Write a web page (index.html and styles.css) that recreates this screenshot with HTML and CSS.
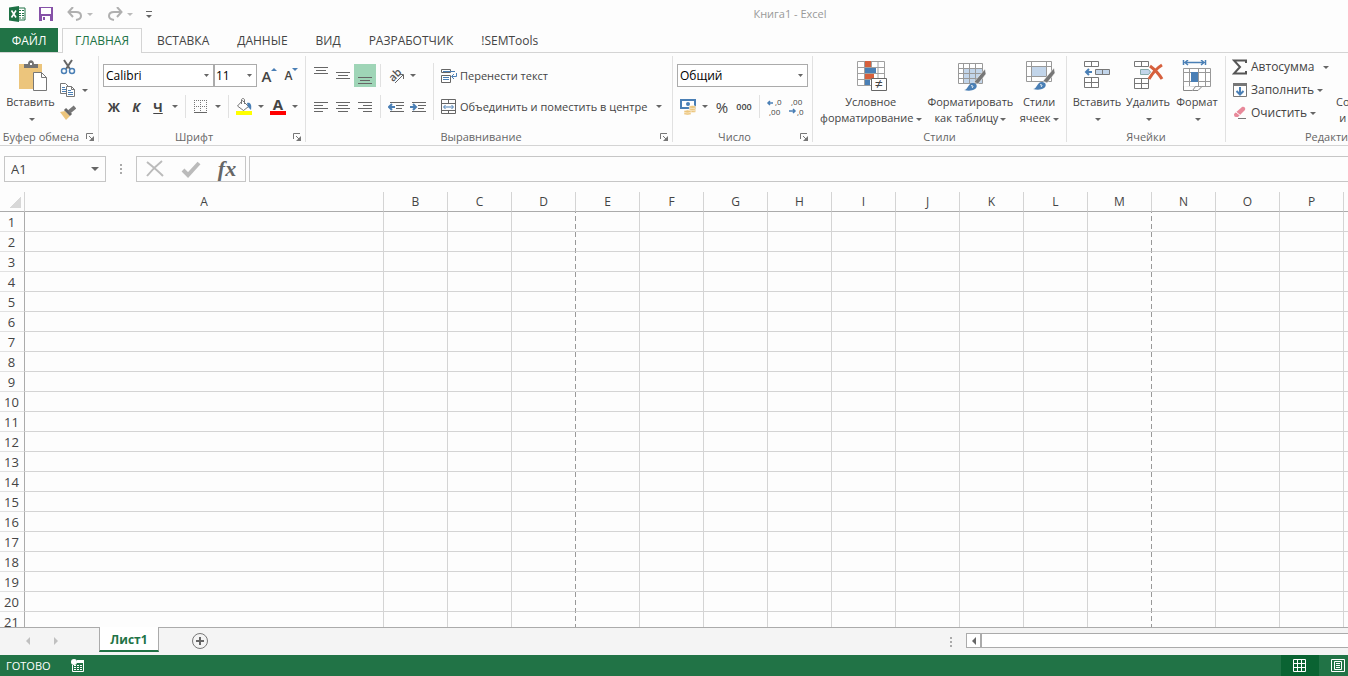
FILE: index.html
```html
<!DOCTYPE html>
<html lang="ru">
<head>
  <meta charset="UTF-8">
  <title>Книга1 - Excel</title>
  <link rel="stylesheet" href="styles.css">
</head>
<body>

  <header class="titlebar">
    <div class="quick-access">
      <svg class="app-logo" width="17" height="16" viewBox="0 0 17 16"><path d="M9 2h7v12H9z" fill="#fff" stroke="#1e7145"/><path d="M10 4.500h2M13 4.500h2M10 7.500h2M13 7.500h2M10 9.500h2M13 9.500h2M10 12h2M13 12h2" stroke="#1e7145"/><path d="M0 1.500L10 0v16L0 14.500z" fill="#1e7145"/><path d="M2.500 4.500l4.500 7M7 4.500l-4.500 7" stroke="#fff" stroke-width="1.600"/></svg>
      <button class="save" aria-label="Сохранить"><svg width="14" height="14" viewBox="0 0 14 14"><path d="M0 0h14v14H0z" fill="#8652a8"/><path d="M2 1h10v6H2zM3 9h8v5H3z" fill="#fff"/><path d="M4 10h2v3H4z" fill="#8652a8"/></svg></button>
      <button class="undo" aria-label="Отменить"><svg width="16" height="14" viewBox="0 0 16 14" fill="none" stroke="#b0b0b0" stroke-width="2"><path d="M2 5h7c3 0 5 1 5 4 0 2-2 3.500-5 4"/><path d="M6 0L1.500 5 6 10"/></svg><i class="caret pale"></i></button>
      <button class="redo" aria-label="Вернуть"><svg width="16" height="14" viewBox="0 0 16 14" fill="none" stroke="#b0b0b0" stroke-width="2"><path d="M14 5H7C4 5 2 6 2 9c0 2 2 3.500 5 4"/><path d="M10 0l4.500 5L10 10"/></svg><i class="caret pale"></i></button>
      <button class="customize" aria-label="Настройка панели"><i class="caret"></i></button>
    </div>
    <div class="title">Книга1 - Excel</div>
  </header>

  <nav class="tabs">
    <a class="tab file" href="#file">ФАЙЛ</a>
    <a class="tab active" href="#home">ГЛАВНАЯ</a>
    <a class="tab" href="#insert">ВСТАВКА</a>
    <a class="tab" href="#data">ДАННЫЕ</a>
    <a class="tab" href="#view">ВИД</a>
    <a class="tab" href="#developer">РАЗРАБОТЧИК</a>
    <a class="tab" href="#semtools">!SEMTools</a>
  </nav>

  <div class="ribbon">

    <section class="group clipboard">
      <div class="group-body">
        <button class="big">
          <svg width="32" height="32" viewBox="0 0 32 32"><path d="M4 4h23v25H4z" fill="#ecc57c"/><path d="M9 8V4h4c0-5 6-5 6 0h4v4z" fill="#737373"/><path d="M15 3h2v2h-2z" fill="#fff"/><path d="M18.500 12.500h8l5 5v13h-13z" fill="#fff" stroke="#777"/><path d="M26.500 12.500v5h5" fill="none" stroke="#777"/></svg>
          <span>Вставить</span>
          <span><i class="caret"></i></span>
        </button>
        <div class="stack">
          <button class="icon" aria-label="Вырезать"><svg width="16" height="16" viewBox="0 0 16 16" fill="none"><path d="M4 1l6 9M12 1l-6 9" stroke="#666" stroke-width="2"/><circle cx="4" cy="12" r="2.500" stroke="#4a7fb5" stroke-width="1.500"/><circle cx="12" cy="12" r="2.500" stroke="#4a7fb5" stroke-width="1.500"/></svg></button>
          <div class="row">
            <button class="icon" aria-label="Копировать"><svg width="16" height="16" viewBox="0 0 16 16"><path d="M.5 1.500h5l3 3v7h-8z" fill="#fff" stroke="#777"/><path d="M2 5.500h3M2 7.500h4M2 9.500h4" stroke="#4a7fb5"/><path d="M6.500 4.500h5l3 3v7h-8z" fill="#fff" stroke="#777"/><path d="M11.500 4.500v3h3" fill="none" stroke="#777"/><path d="M8 8.500h3M8 10.500h5M8 12.500h5" stroke="#4a7fb5"/></svg></button>
            <button class="drop" aria-label="Параметры копирования"><i class="caret"></i></button>
          </div>
          <button class="icon" aria-label="Формат по образцу"><svg width="16" height="16" viewBox="0 0 16 16"><path d="M0 7l5-1 5 5-4 4z" fill="#ecc57c"/><path d="M5 4l6 6" stroke="#666" stroke-width="3"/><path d="M9 7l6-5" stroke="#777" stroke-width="4"/></svg></button>
        </div>
      </div>
      <div class="group-label"><span>Буфер обмена</span><button class="launcher" aria-label="Буфер обмена"><svg width="8" height="8"><path d="M.5 6V.5H7" fill="none" stroke="#777"/><path d="M3 3l3 3" stroke="#777"/><path d="M8 3v5H3z" fill="#777"/></svg></button></div>
    </section>

    <section class="group font">
      <div class="group-body rows">
        <div class="row">
          <select class="font-name" aria-label="Шрифт"><option>Calibri</option></select>
          <select class="font-size" aria-label="Размер шрифта"><option>11</option></select>
          <button class="icon resize" aria-label="Увеличить размер шрифта"><span class="letter large">А</span><i class="up"></i></button>
          <button class="icon resize" aria-label="Уменьшить размер шрифта"><span class="letter">А</span><i class="down"></i></button>
        </div>
        <div class="row">
          <button class="icon bold">Ж</button>
          <button class="icon italic">К</button>
          <button class="icon underline">Ч</button>
          <button class="drop" aria-label="Вид подчёркивания"><i class="caret"></i></button>
          <i class="divider"></i>
          <button class="icon" aria-label="Границы"><svg width="14" height="14"><path d="M0 .5h13M0 6.500h13M.5 0v12M6.500 0v12M12.500 0v12" stroke="#777" stroke-dasharray="1 1"/><path d="M0 12.500h13" stroke="#666"/></svg></button>
          <button class="drop" aria-label="Виды границ"><i class="caret"></i></button>
          <i class="divider"></i>
          <button class="icon" aria-label="Цвет заливки"><svg width="16" height="17"><path d="M6.500 2.500l6 6-5 4-6-4.500z" fill="#fff" stroke="#777"/><path d="M5.500 6V2c0-2 3-2 3 0v4" fill="none" stroke="#777"/><path d="M11 5c3-1 5 1 4 7l-3-3z" fill="#4a7fb5"/><path d="M0 13h16v4H0z" fill="#ff0"/></svg></button>
          <button class="drop" aria-label="Цвета заливки"><i class="caret"></i></button>
          <button class="icon color" aria-label="Цвет текста"><span>А</span></button>
          <button class="drop" aria-label="Цвета текста"><i class="caret"></i></button>
        </div>
      </div>
      <div class="group-label"><span>Шрифт</span><button class="launcher" aria-label="Параметры шрифта"><svg width="8" height="8"><path d="M.5 6V.5H7" fill="none" stroke="#777"/><path d="M3 3l3 3" stroke="#777"/><path d="M8 3v5H3z" fill="#777"/></svg></button></div>
    </section>

    <section class="group align">
      <div class="group-body">
        <div class="rows">
          <div class="row">
            <button class="icon" aria-label="По верхнему краю"><svg width="14" height="20"><path d="M0 1.500h14M2 4.500h10M0 7.500h14" stroke="#666"/></svg></button>
            <button class="icon" aria-label="По середине"><svg width="14" height="20"><path d="M0 6.500h14M2 9.500h10M0 12.500h14" stroke="#666"/></svg></button>
            <button class="icon pressed" aria-label="По нижнему краю"><svg width="14" height="20"><path d="M0 11.500h14M2 14.500h10M0 17.500h14" stroke="#666"/></svg></button>
            <i class="divider"></i>
            <button class="icon" aria-label="Ориентация"><svg class="rotate" width="18" height="18"><text class="ab" x="2" y="12" transform="rotate(-45 8 9)">ab</text><path d="M8 16l8-8M12 7.500h4.500V12" fill="none" stroke="#666"/></svg></button>
            <button class="drop" aria-label="Виды ориентации"><i class="caret"></i></button>
          </div>
          <div class="row">
            <button class="icon" aria-label="По левому краю"><svg width="14" height="12"><path d="M0 1.500h14M0 4.500h9M0 7.500h14M0 10.500h9" stroke="#666"/></svg></button>
            <button class="icon" aria-label="По центру"><svg width="14" height="12"><path d="M0 1.500h14M2 4.500h10M0 7.500h14M2 10.500h10" stroke="#666"/></svg></button>
            <button class="icon" aria-label="По правому краю"><svg width="14" height="12"><path d="M0 1.500h14M5 4.500h9M0 7.500h14M5 10.500h9" stroke="#666"/></svg></button>
            <i class="divider"></i>
            <button class="icon" aria-label="Уменьшить отступ"><svg width="16" height="12"><path d="M2 1.500h14M8 4.500h8M8 7.500h6M2 10.500h14" stroke="#666"/><path d="M7 6H1M4 3L1 6l3 3" fill="none" stroke="#4a7fb5" stroke-width="2"/></svg></button>
            <button class="icon" aria-label="Увеличить отступ"><svg width="16" height="12"><path d="M2 1.500h14M8 4.500h8M8 7.500h6M2 10.500h14" stroke="#666"/><path d="M0 6h6M3 3l3 3-3 3" fill="none" stroke="#4a7fb5" stroke-width="2"/></svg></button>
          </div>
        </div>
        <i class="divider tall"></i>
        <div class="rows">
          <button class="line"><svg width="16" height="16"><path d="M.5 1.500h9v3h-9zM.5 7.500h9v7h-9z" fill="#fff" stroke="#666"/><path d="M2 3.500h12M2 9.500h6M2 11.500h6M15.500 5v3.500H11M13 6l-2.500 2.500L13 11" fill="none" stroke="#4a7fb5"/></svg>Перенести текст</button>
          <button class="line merge"><svg width="16" height="16"><path d="M.5.5h14v14H.5zM.5 4.500h14M.5 11.500h14M7.500.5v4M7.500 11.500v3" fill="none" stroke="#666"/><path d="M3 8h9M4.500 6L2.500 8l2 2M10.500 6l2 2-2 2" fill="none" stroke="#4a7fb5"/></svg>Объединить и поместить в центре<i class="caret"></i></button>
        </div>
      </div>
      <div class="group-label"><span>Выравнивание</span><button class="launcher" aria-label="Параметры выравнивания"><svg width="8" height="8"><path d="M.5 6V.5H7" fill="none" stroke="#777"/><path d="M3 3l3 3" stroke="#777"/><path d="M8 3v5H3z" fill="#777"/></svg></button></div>
    </section>

    <section class="group number">
      <div class="group-body rows">
        <div class="row">
          <select class="format" aria-label="Числовой формат"><option>Общий</option></select>
        </div>
        <div class="row">
          <button class="icon" aria-label="Финансовый формат"><svg width="16" height="16"><path d="M1 1h14v8H1z" fill="#fff" stroke="#4a7fb5" stroke-width="2"/><circle cx="8" cy="5" r="2" fill="#4a7fb5"/><g fill="#ecc57c" stroke="#fff" stroke-width=".5"><ellipse cx="12.500" cy="12" rx="3.500" ry="1.500"/><ellipse cx="12.500" cy="10" rx="3.500" ry="1.500"/><ellipse cx="12.500" cy="8" rx="3.500" ry="1.500"/><ellipse cx="7.500" cy="14.500" rx="3.500" ry="1.500"/><ellipse cx="7.500" cy="12.500" rx="3.500" ry="1.500"/></g></svg></button>
          <button class="drop" aria-label="Валюты"><i class="caret"></i></button>
          <button class="icon percent">%</button>
          <button class="icon thousands">000</button>
          <i class="divider"></i>
          <button class="icon" aria-label="Увеличить разрядность"><svg class="digits" width="16" height="16"><text x="8" y="6">,0</text><text x="2" y="16">,00</text><path d="M6 4H1M3 2L1 4l2 2" fill="none" stroke="#4a7fb5" stroke-width="1.500"/></svg></button>
          <button class="icon" aria-label="Уменьшить разрядность"><svg class="digits" width="16" height="16"><text x="2" y="6">,00</text><text x="8" y="16">,0</text><path d="M0 12h6M4 10l2 2-2 2" fill="none" stroke="#4a7fb5" stroke-width="1.500"/></svg></button>
        </div>
      </div>
      <div class="group-label"><span>Число</span><button class="launcher" aria-label="Параметры числа"><svg width="8" height="8"><path d="M.5 6V.5H7" fill="none" stroke="#777"/><path d="M3 3l3 3" stroke="#777"/><path d="M8 3v5H3z" fill="#777"/></svg></button></div>
    </section>

    <section class="group styles">
      <div class="group-body">
        <button class="big conditional">
          <svg width="32" height="32"><path d="M2.500 1.500h27v24h-27zM2.500 7.500h27M2.500 13.500h27M2.500 19.500h27M9.500 1v24M16.500 1v24M23 1v24" fill="#fff" stroke="#a0a0a0"/><path d="M10 1h6v6h-6zM10 14h9v5h-9z" fill="#d6603d"/><path d="M10 8h11v5H10zM10 20h5v5h-5z" fill="#4a7fb5"/><path d="M16.500 18.500h15v12h-15z" fill="#fff" stroke="#666"/><text class="not-equal" x="20" y="29">≠</text></svg>
          <span>Условное</span>
          <span>форматирование<i class="caret"></i></span>
        </button>
        <button class="big as-table">
          <svg width="32" height="32"><path d="M4.500 3.500h24v20h-24z" fill="#fff" stroke="#999"/><path d="M10 9h18v14H10z" fill="#c2d5ea"/><path d="M4 8.500h24M4 13.500h24M4 18.500h24M9.500 3v20M15.500 3v20M21.500 3v20" stroke="#999"/><path d="M20 22L31 9l1 5-8 10z" fill="#777" stroke="#fff" stroke-width=".5"/><path d="M10 30c4 0 4-7 9-7 4 0 5 4 2 6-3 2-7 2-11 1z" fill="#4a7fb5"/><path d="M17 26c1-1 3 0 1 2" stroke="#fff" fill="none"/></svg>
          <span>Форматировать</span>
          <span>как таблицу<i class="caret"></i></span>
        </button>
        <button class="big cell-styles">
          <svg width="32" height="32"><path d="M3.500 1.500h25v20h-25zM3.500 6.500h25M3.500 16.500h25M8.500 1v20M23.500 1v20" fill="#fff" stroke="#999"/><path d="M9 7h14v9H9z" fill="#c2d5ea"/><path d="M20 21L31 8l1 5-8 10z" fill="#777" stroke="#fff" stroke-width=".5"/><path d="M10 29c4 0 4-7 9-7 4 0 5 4 2 6-3 2-7 2-11 1z" fill="#4a7fb5"/><path d="M17 25c1-1 3 0 1 2" stroke="#fff" fill="none"/></svg>
          <span>Стили</span>
          <span>ячеек<i class="caret"></i></span>
        </button>
      </div>
      <div class="group-label"><span>Стили</span></div>
    </section>

    <section class="group cells">
      <div class="group-body">
        <button class="big insert">
          <svg width="32" height="32"><path d="M3.500 1.500h14v5h-14zM10.500 1.500v5M3.500 17.500h14v10h-14zM3.500 22.500h14M10.500 17.500v10" fill="#fff" stroke="#777"/><path d="M14.500 9.500h14v5h-14zM21.500 9.500v5" fill="#c2d5ea" stroke="#777"/><path d="M11 12H5M8 9l-3 3 3 3" fill="none" stroke="#4a7fb5" stroke-width="2"/></svg>
          <span>Вставить</span>
          <span><i class="caret"></i></span>
        </button>
        <button class="big delete">
          <svg width="32" height="32"><path d="M2.500 1.500h14v5h-14zM9.500 1.500v5M2.500 18.500h14v10h-14zM2.500 23.500h14M9.500 18.500v10" fill="#fff" stroke="#777"/><path d="M8.500 9.500h8l2 2.500-2 2.500h-8z" fill="#c2d5ea" stroke="#8aa"/><path d="M18 6c4 3 9 8 12 13M30 5c-5 3-10 9-13 14" fill="none" stroke="#d6603d" stroke-width="3"/></svg>
          <span>Удалить</span>
          <span><i class="caret"></i></span>
        </button>
        <button class="big cell-format">
          <svg width="32" height="32"><path d="M2.500 0v5M24.500 0v5M4 2.500h19M7 0L4 2.500 7 5M20 0l3 2.500L20 5" fill="none" stroke="#4a7fb5" stroke-width="1.500"/><path d="M2.500 8.500h27v18h-27zM2.500 12.500h27M2.500 21.500h27M8.500 8v18M17.500 8v18M24.500 8v18" fill="#fff" stroke="#999"/><path d="M10 12h7v10h-7z" fill="#4a7fb5"/><path d="M2.500 26v4.500h9l3-4M12 30.500h5l4-4" fill="#fff" stroke="#888"/></svg>
          <span>Формат</span>
          <span><i class="caret"></i></span>
        </button>
      </div>
      <div class="group-label"><span>Ячейки</span></div>
    </section>

    <section class="group editing">
      <div class="group-body">
        <div class="stack">
          <button class="line autosum"><svg width="16" height="16"><path d="M14 4V1.500H2L8 8l-6 6.500h12V12" fill="none" stroke="#555" stroke-width="2"/></svg>Автосумма<i class="caret"></i></button>
          <button class="line"><svg width="16" height="16"><path d="M1.500 1.500h13v13h-13z" fill="#fff" stroke="#777"/><path d="M1 1h14v3H1z" fill="#777"/><path d="M8 5v7M4.500 9L8 12.500 11.500 9" fill="none" stroke="#4a7fb5" stroke-width="2"/></svg>Заполнить<i class="caret"></i></button>
          <button class="line"><svg width="16" height="16"><path d="M2 9l8-7c2-1 4 1 3 3l-7 7H4c-2 0-2-2-2-3z" fill="#e8899a"/><path d="M4 7l5 4" stroke="#fff"/><path d="M6 13.500h8" stroke="#777"/></svg>Очистить<i class="caret"></i></button>
        </div>
        <button class="big sort">
          <svg width="32" height="32"><path d="M13 3h18L24 13v12l-4-3v-9z" fill="#777"/></svg>
          <span>Сортировка</span>
          <span>и фильтр<i class="caret"></i></span>
        </button>
      </div>
      <div class="group-label"><span>Редактирование</span></div>
    </section>

  </div>

  <div class="formula-bar">
    <div class="name-box">
      <input type="text" value="A1" aria-label="Имя">
      <button aria-label="Список имён"><i class="caret large"></i></button>
    </div>
    <i class="dots"></i>
    <div class="formula-buttons">
      <button aria-label="Отмена"><svg width="18" height="18"><path d="M1 2c5 4 11 9 16 14M16 1C11 5 5 11 1 16" fill="none" stroke="#bbb" stroke-width="2"/></svg></button>
      <button aria-label="Ввод"><svg width="20" height="18"><path d="M2 10l5 5L18 3" fill="none" stroke="#bbb" stroke-width="4"/></svg></button>
      <button class="fx">fx</button>
    </div>
    <input class="formula" type="text" aria-label="Строка формул">
  </div>

  <main class="sheet">
    <table>
      <colgroup id="cols"></colgroup>
      <thead><tr id="letters"></tr></thead>
      <tbody id="cells"></tbody>
    </table>
  </main>

  <div class="sheet-tabs">
    <div class="sheet-nav">
      <button aria-label="Предыдущий лист"><i class="prev"></i></button>
      <button aria-label="Следующий лист"><i class="next"></i></button>
    </div>
    <button class="sheet-tab">Лист1</button>
    <button class="add-sheet" aria-label="Новый лист"><svg width="16" height="16"><circle cx="8" cy="8" r="7.500" fill="none" stroke="#777"/><path d="M8 4v8M4 8h8" stroke="#666" stroke-width="2"/></svg></button>
    <div class="scroll-area">
      <i class="dots"></i>
      <div class="scrollbar"><button aria-label="Прокрутить влево"><i class="prev"></i></button><div class="thumb"></div></div>
    </div>
  </div>

  <footer class="status">
    <span>ГОТОВО</span>
    <button class="macro" aria-label="Запись макроса"><svg width="14" height="14"><path d="M6 1h7v3H6z" fill="#fff"/><path d="M1.500 6v6.500h11V4" fill="none" stroke="#fff"/><circle cx="3" cy="3" r="3" fill="#fff"/><path d="M3 6.500h8M3 8.500h8M3 10.500h8" stroke="#fff" stroke-dasharray="2 1"/></svg></button>
    <div class="views">
      <button class="view current" aria-label="Обычный"><svg width="13" height="13"><path d="M.5.5h12v12H.5zM.5 4.500h12M.5 8.500h12M4.500.5v12M8.500.5v12" fill="none" stroke="#fff"/></svg></button>
      <button class="view" aria-label="Разметка страницы"><svg width="14" height="13"><path d="M.5.5h13v12H.5zM3.500 2.500h7v8h-7zM5 4.500h4M5 6.500h4M5 8.500h4" fill="none" stroke="#fff"/></svg></button>
    </div>
  </footer>

  <script>
    const letters = 'ABCDEFGHIJKLMNOPQ'.split('');
    const pageBreaks = ['D', 'M'];
    const rowCount = 22;

    let cols = '<col class="col-numbers">';
    let head = '<th class="corner"></th>';
    let cells = '';

    letters.forEach(letter => {
      let name = letter === 'A' ? 'col-wide' : 'col-normal';
      if (pageBreaks.includes(letter)) {
        name += ' page-break';
      }
      cols += `<col class="${name}">`;
      head += `<th>${letter}</th>`;
      cells += pageBreaks.includes(letter) ? '<td class="at-break"></td>' : '<td></td>';
    });

    let rows = '';
    for (let i = 1; i <= rowCount; i++) {
      rows += `<tr><th>${i}</th>${cells}</tr>`;
    }

    document.getElementById('cols').innerHTML = cols;
    document.getElementById('letters').innerHTML = head;
    document.getElementById('cells').innerHTML = rows;
  </script>
</body>
</html>
```

FILE: styles.css
```css
* {
  box-sizing: border-box;
}

body {
  margin: 0;
  height: 100vh;
  display: flex;
  flex-direction: column;
  overflow: hidden;
  background: #fdfdfd;
  color: #444;
  font-family: "Open Sans", "Noto Sans", sans-serif;
  font-size: 12px;
  line-height: 16px;
}

button, input, select {
  font: inherit;
  color: inherit;
  margin: 0;
  padding: 0;
  border: none;
  background: none;
}

button {
  display: flex;
  align-items: center;
  justify-content: center;
  white-space: nowrap;
}

svg {
  display: block;
  flex: none;
}

.caret {
  display: inline-block;
  flex: none;
  border: 3px solid transparent;
  border-top-color: #666;
  border-bottom: none;
}

.caret.pale {
  border-top-color: #bbb;
}

.caret.large {
  border-width: 4px 4px 0;
}

/* title bar */
.titlebar {
  display: flex;
  align-items: center;
  flex: 0 0 28px;
}

.quick-access {
  flex: 0 0 232px;
  display: flex;
  align-items: center;
  padding-left: 9px;
}

.save {
  margin-left: 13px;
}

.undo, .redo {
  gap: 4px;
  margin-left: 14px;
}

.customize {
  margin-left: 13px;
  padding-top: 3px;
  border-top: 1px solid #666;
}

.title {
  flex: 1;
  text-align: center;
  color: #999;
  font-size: 11px;
}

/* tabs */
.tabs {
  display: flex;
  flex: 0 0 25px;
  border-bottom: 1px solid #d4d4d4;
}

.tab {
  height: 24px;
  padding: 0 14px;
  line-height: 25px;
  color: #444;
  text-decoration: none;
}

.tab.file {
  width: 58px;
  padding: 0;
  margin-right: 4px;
  text-align: center;
  background: #217346;
  color: #fff;
}

.tab.active {
  height: 25px;
  margin: 0 1px -1px 0;
  padding: 0 12px;
  border: 1px solid #d4d4d4;
  border-bottom: none;
  line-height: 23px;
  background: #fdfdfd;
  color: #217346;
}

/* ribbon */
.ribbon {
  display: flex;
  flex: 0 0 93px;
  overflow: hidden;
  border-bottom: 1px solid #d4d4d4;
}

.group {
  display: flex;
  flex-direction: column;
  flex: none;
  margin: 3px 0;
  border-right: 1px solid #e1e1e1;
}

.clipboard { width: 99px; }
.font { width: 207px; }
.align { width: 367px; }
.number { width: 140px; }
.styles { width: 254px; }
.cells { width: 159px; }
.editing { width: 248px; }

.group-body {
  display: flex;
  flex: 1;
  padding: 0 4px;
}

.group-label {
  display: flex;
  align-items: center;
  height: 10px;
  color: #666;
  font-size: 11px;
  line-height: 10px;
}

.group-label span {
  flex: 1;
  text-align: center;
  white-space: nowrap;
}

.launcher {
  width: 16px;
  height: 10px;
}

.rows {
  display: flex;
  flex-direction: column;
  gap: 8px;
  padding-top: 8px;
}

.row {
  display: flex;
}

.stack {
  display: flex;
  flex-direction: column;
  gap: 1px;
}

.icon {
  width: 22px;
  height: 23px;
}

.stack .icon, .stack .drop, .stack .line {
  height: 22px;
}

.drop {
  width: 12px;
  height: 23px;
}

.divider {
  width: 1px;
  margin: 0 4px;
  background: #e1e1e1;
}

.divider.tall {
  margin-top: 7px;
  margin-bottom: 12px;
}

.big {
  flex-direction: column;
  justify-content: flex-start;
  padding-top: 4px;
  font-size: 11px;
}

.big svg {
  margin-bottom: 2px;
}

.big span {
  height: 16px;
}

.big .caret {
  margin-left: 2px;
  vertical-align: middle;
}

.clipboard .big { width: 53px; }
.conditional { width: 108px; }
.as-table { width: 92px; }
.cell-styles { width: 46px; }
.insert { width: 52px; }
.delete { width: 50px; }
.cell-format { width: 48px; }
.sort { width: 70px; }

.line {
  height: 23px;
  justify-content: flex-start;
  gap: 3px;
  padding-left: 3px;
}

.align .line {
  font-size: 11px;
}

.merge .caret {
  margin-left: 6px;
}

.autosum .caret {
  margin-left: 6px;
}

.editing .stack {
  width: 104px;
}

.editing .group-body {
  padding-left: 3px;
}

select {
  height: 23px;
  padding-left: 2px;
  appearance: none;
  border: 1px solid #ababab;
  border-radius: 0;
  color: #000;
  background: #fff url("data:image/svg+xml,%3Csvg xmlns='http://www.w3.org/2000/svg' width='5' height='3'%3E%3Cpath d='M0 0h5L2.500 3z' fill='%23666'/%3E%3C/svg%3E") no-repeat right 4px center;
}

.font-name {
  width: 111px;
}

.font-size {
  width: 43px;
  padding-left: 1px;
}

.format {
  width: 131px;
}

.icon.resize {
  width: 19px;
  margin-left: 3px;
}

.letter {
  font-weight: 600;
}

.letter.large {
  font-size: 15px;
}

.up, .down {
  align-self: flex-start;
  margin-top: 4px;
  border: 3px solid transparent;
}

.up {
  border-bottom-color: #4a7fb5;
  border-top: none;
}

.down {
  border-top-color: #4a7fb5;
  border-bottom: none;
}

.bold, .italic, .underline {
  font-size: 13px;
  font-weight: bold;
}

.italic {
  font-style: italic;
}

.underline {
  text-decoration: underline;
}

.color span {
  width: 16px;
  height: 17px;
  border-bottom: 4px solid #f00;
  font-size: 15px;
  font-weight: bold;
  line-height: 13px;
}

.pressed {
  background: #9fd5b7;
}

.rotate {
  overflow: visible;
}

.ab {
  font-size: 11px;
  font-weight: 600;
  fill: #555;
}

.percent {
  font-size: 15px;
}

.thousands {
  font-size: 9px;
  font-weight: 600;
}

.digits {
  overflow: visible;
  font-size: 8px;
  fill: #444;
}

.not-equal {
  font-size: 14px;
  fill: #444;
}

/* formula bar */
.formula-bar {
  display: flex;
  flex: 0 0 46px;
  padding: 10px 0 10px 4px;
}

.name-box {
  display: flex;
  width: 102px;
  border: 1px solid #c6c6c6;
}

.name-box input {
  flex: 1;
  min-width: 0;
  padding-left: 6px;
  font-size: 13px;
}

.name-box button {
  width: 20px;
}

.dots {
  align-self: center;
  width: 2px;
  height: 10px;
  background: repeating-linear-gradient(#aaa 0 2px, transparent 2px 4px);
}

.formula-bar .dots {
  margin: 0 14px;
}

.formula-buttons {
  display: flex;
  width: 110px;
  border: 1px solid #c6c6c6;
}

.formula-buttons button {
  flex: 1;
}

.formula-buttons .fx {
  font: italic bold 22px/20px "Liberation Serif", serif;
  color: #666;
}

.formula {
  flex: 1;
  margin-left: 3px;
  padding: 0 6px;
  border: 1px solid #c6c6c6;
  border-right: none;
}

/* sheet */
.sheet {
  flex: 1;
  min-height: 0;
  overflow: hidden;
}

table {
  width: 1408px;
  table-layout: fixed;
  border-collapse: separate;
  border-spacing: 0;
}

.col-numbers { width: 25px; }
.col-wide { width: 359px; }
.col-normal { width: 64px; }

.page-break {
  background: repeating-linear-gradient(#999 0 5px, #fdfdfd 5px 8px) no-repeat right top / 1px 100%;
}

th, td {
  height: 20px;
  padding: 0;
  border-right: 1px solid #d4d4d4;
  border-bottom: 1px solid #d4d4d4;
}

td.at-break {
  border-right-color: transparent;
}

th {
  font-weight: normal;
  line-height: 18px;
  background: #fdfdfd;
}

thead th {
  border-bottom-color: #ababab;
}

tbody th {
  padding: 1px 1px 0 0;
  font-size: 13px;
  border-right-color: #ababab;
  border-bottom-color: #e1e1e1;
}

.corner {
  background: linear-gradient(135deg, transparent 50%, #d8d8d8 50%) no-repeat right 3px bottom 3px / 12px 12px;
}

/* sheet tabs */
.sheet-tabs {
  display: flex;
  flex: 0 0 28px;
  border-top: 1px solid #ababab;
  background: #f4f4f4;
}

.sheet-nav {
  display: flex;
  flex: 0 0 99px;
  padding-left: 14px;
}

.sheet-nav button {
  width: 28px;
  height: 26px;
}

.prev, .next {
  border: 4px solid transparent;
}

.prev {
  border-right-color: #666;
  border-left: none;
}

.next {
  border-left-color: #666;
  border-right: none;
}

.sheet-nav .prev {
  border-right-color: #c0c0c0;
}

.sheet-nav .next {
  border-left-color: #c0c0c0;
}

.sheet-tab {
  width: 60px;
  height: 25px;
  margin-top: -1px;
  padding-top: 3px;
  border: 1px solid #ababab;
  border-top: none;
  border-bottom: 2px solid #217346;
  background: #fff;
  color: #217346;
  font-weight: bold;
}

.add-sheet {
  width: 16px;
  height: 26px;
  margin-left: 33px;
}

.scroll-area {
  display: flex;
  width: 398px;
  margin-left: auto;
}

.scrollbar {
  display: flex;
  flex: 1;
  height: 15px;
  margin: 5px 0 0 14px;
  border: 1px solid #ababab;
  border-right: none;
  background: #fff;
}

.scrollbar button {
  width: 15px;
  border-right: 2px solid #ababab;
}

/* status bar */
.status {
  display: flex;
  align-items: center;
  flex: 0 0 21px;
  padding-left: 6px;
  background: #217346;
  color: #fff;
  font-size: 11px;
}

.macro {
  margin-left: 20px;
}

.views {
  display: flex;
  align-self: stretch;
  margin-left: auto;
}

.view {
  justify-content: flex-start;
  width: 29px;
  padding-left: 12px;
}

.view.current {
  width: 38px;
  background: #0a6332;
}
```
